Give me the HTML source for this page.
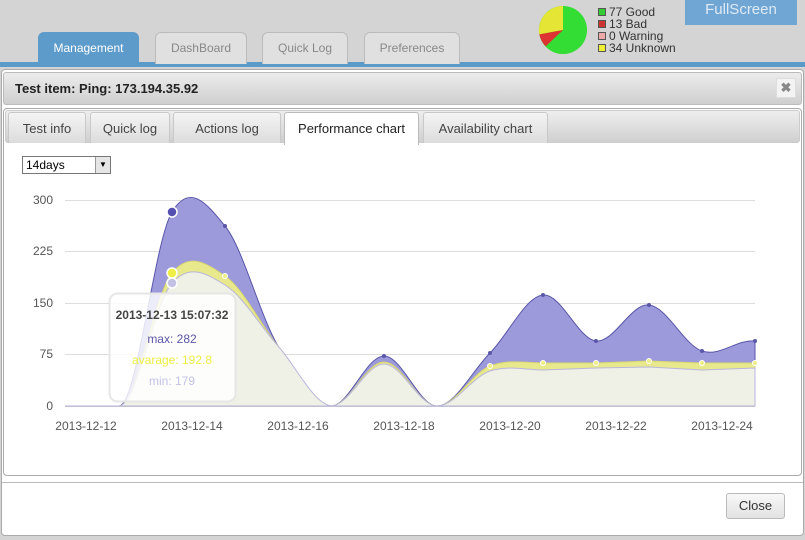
<!DOCTYPE html>
<html><head><meta charset="utf-8"><style>
*{margin:0;padding:0;box-sizing:border-box}
body{width:805px;height:540px;background:#d4d4d4;font-family:"Liberation Sans",sans-serif;position:relative;overflow:hidden}
.abs{position:absolute}
.tab{position:absolute;top:32px;height:32px;border:1px solid #bbb;border-bottom:none;border-radius:6px 6px 0 0;background:#e0e0e0;color:#888;font-size:12px;text-align:center;line-height:30px}
.itab{position:absolute;top:112px;height:31px;border:1px solid #c8c8c8;border-bottom:none;border-radius:3px 3px 0 0;background:linear-gradient(#f4f4f4,#dcdcdc);color:#444;font-size:13px;text-align:center;line-height:31px}
</style></head><body>
<div class="abs" style="left:0;top:62px;width:805px;height:5px;background:#5b9bc9"></div>
<div class="tab" style="left:38px;width:101px;background:#5d9bcb;border-color:#5d9bcb;color:#fff;height:34px">Management</div>
<div class="tab" style="left:155px;width:92px">DashBoard</div>
<div class="tab" style="left:262px;width:86px">Quick Log</div>
<div class="tab" style="left:364px;width:96px">Preferences</div>
<svg class="abs" style="left:538px;top:5px" width="50" height="50" viewBox="-26 -26 52 52">
<circle r="25" fill="#33dd33"/>
<path d="M0 0 L0 -25 A25 25 0 0 0 -24.6 4.5 Z" fill="#e5e535"/>
<path d="M0 0 L-24.6 4.5 A25 25 0 0 0 -18 17 Z" fill="#dd3333"/>
</svg>
<div class="abs" style="left:598px;top:6px;font-size:12px;line-height:12px;color:#333">
<div><span style="display:inline-block;width:8px;height:8px;background:#3c3;border:1px solid #555;margin-right:3px"></span>77 Good</div>
<div><span style="display:inline-block;width:8px;height:8px;background:#c33;border:1px solid #555;margin-right:3px"></span>13 Bad</div>
<div><span style="display:inline-block;width:8px;height:8px;background:#eaa;border:1px solid #555;margin-right:3px"></span>0 Warning</div>
<div><span style="display:inline-block;width:8px;height:8px;background:#ee3;border:1px solid #555;margin-right:3px"></span>34 Unknown</div>
</div>
<div class="abs" style="left:685px;top:0;width:112px;height:25px;background:#6fa6d4;color:#dfeaf5;font-size:15px;text-align:center;line-height:20px">FullScreen</div>
<div class="abs" style="left:1px;top:69px;width:803px;height:467px;background:#fff;border:1px solid #aaa;border-radius:4px"></div>
<div class="abs" style="left:3px;top:72px;width:799px;height:33px;background:linear-gradient(#ececec,#cfcfcf);border:1px solid #bbb;border-radius:3px"></div>
<div class="abs" style="left:15px;top:81px;font-size:13px;font-weight:bold;color:#222">Test item: Ping: 173.194.35.92</div>
<div class="abs" style="left:776px;top:78px;width:20px;height:20px;background:#f3f3f3;border:1px solid #ddd;color:#888;font-size:13px;font-weight:bold;text-align:center;line-height:18px">✖</div>
<div class="abs" style="left:3px;top:108px;width:799px;height:368px;border:1px solid #aaa;border-radius:4px;background:#fff"></div>
<div class="abs" style="left:5px;top:110px;width:795px;height:33px;background:linear-gradient(#eee,#d0d0d0);border:1px solid #ccc;border-radius:3px"></div>
<div class="itab" style="left:8px;width:78px">Test info</div>
<div class="itab" style="left:90px;width:80px">Quick log</div>
<div class="itab" style="left:173px;width:108px">Actions log</div>
<div class="itab" style="left:284px;width:135px;background:#fff;height:33px;border-color:#bbb;color:#222">Performance chart</div>
<div class="itab" style="left:423px;width:125px">Availability chart</div>
<div class="abs" style="left:22px;top:156px;width:89px;height:18px;border:1px solid #777;background:#fff;font-size:12px;line-height:16px;padding-left:3px">14days
<div class="abs" style="right:0;top:0;width:15px;height:16px;background:#e5e5e5;border-left:1px solid #999;font-size:8px;text-align:center;line-height:16px">▼</div></div>
<svg class="abs" style="left:0;top:0" width="805" height="540">
<g stroke="#ddd" stroke-width="1">
<line x1="65" y1="200.5" x2="755" y2="200.5"/><line x1="65" y1="251.5" x2="755" y2="251.5"/><line x1="65" y1="303.5" x2="755" y2="303.5"/><line x1="65" y1="354.5" x2="755" y2="354.5"/></g>
<line x1="65" y1="406.5" x2="755" y2="406.5" stroke="#ccc"/>
<g font-size="12" fill="#555" text-anchor="end" font-family="Liberation Sans">
<text x="53" y="204">300</text><text x="53" y="255">225</text><text x="53" y="307">150</text><text x="53" y="358">75</text><text x="53" y="410">0</text></g>
<g font-size="12" fill="#555" text-anchor="middle" font-family="Liberation Sans">
<text x="86" y="430">2013-12-12</text><text x="192" y="430">2013-12-14</text><text x="298" y="430">2013-12-16</text><text x="404" y="430">2013-12-18</text><text x="510" y="430">2013-12-20</text><text x="616" y="430">2013-12-22</text><text x="722" y="430">2013-12-24</text></g>
<path d="M65 406 L119 406 C137 406 154 242 172 212 C190 182 207 204 225 226 C243 248 260 316 278 346 C296 376 313 404 331 406 C349 406 366 356 384 356 C402 356 419 406 437 406 C455 406 472 371 490 353 C508 335 525 297 543 295 C561 293 578 339 596 341 C614 343 631 303 649 305 C667 307 684 345 702 351 C720 357 737 339 755 341 L755 406 Z" fill="#9d9adb" stroke="#5a57a8" stroke-width="1"/>
<path d="M65 406 L119 406 C137 406 154 295 172 273 C190 251 207 264 225 276 C243 288 260 324 278 346 C296 368 313 403 331 406 C349 406 366 362 384 362 C402 362 419 406 437 406 C455 406 472 373 490 366 C508 359 525 363 543 363 L596 363 L649 361 L702 363 L755 363 L755 406 Z" fill="#e8e88c" stroke="#d8d870"/>
<path d="M65 406 L119 406 C137 406 154 303 172 283 C190 263 207 274 225 285 C243 296 260 326 278 346 C296 366 313 403 331 406 C349 406 366 364 384 364 C402 364 419 406 437 406 C455 406 472 377 490 371 C508 365 525 370 543 370 L596 368 L649 367 L702 370 L755 368 L755 406 Z" fill="#f0f1e6" stroke="#b8b6dc"/>
<g fill="#5a57a8"><circle cx="225" cy="226" r="2"/><circle cx="384" cy="356" r="2"/><circle cx="490" cy="353" r="2"/><circle cx="543" cy="295" r="2"/><circle cx="596" cy="341" r="2"/><circle cx="649" cy="305" r="2"/><circle cx="702" cy="351" r="2"/><circle cx="755" cy="341" r="2"/></g>
<g fill="#eeee88" stroke="#fff"><circle cx="225" cy="276" r="2.5"/><circle cx="490" cy="366" r="2.5"/><circle cx="543" cy="363" r="2.5"/><circle cx="596" cy="363" r="2.5"/><circle cx="649" cy="361" r="2.5"/><circle cx="702" cy="363" r="2.5"/><circle cx="755" cy="363" r="2.5"/></g>
<rect x="109.5" y="293.5" width="126" height="108" rx="8" fill="rgba(255,255,255,0.82)" stroke="#e6e6e6" stroke-width="2"/>
<circle cx="172" cy="212" r="5" fill="#5550b0" stroke="#fff" stroke-width="1.5"/>
<circle cx="172" cy="273" r="5" fill="#eeee44" stroke="#fff" stroke-width="1.5"/>
<circle cx="172" cy="283" r="5" fill="#c3c1e6" stroke="#fff" stroke-width="1.5"/>
<g font-family="Liberation Sans" font-size="12" text-anchor="middle">
<text x="172" y="319" font-weight="bold" fill="#444">2013-12-13 15:07:32</text>
<text x="172" y="343" fill="#5a57a8">max: 282</text>
<text x="172" y="364" fill="#eeee44">avarage: 192.8</text>
<text x="172" y="385" fill="#c3c1e6">min: 179</text></g>
</svg>
<div class="abs" style="left:2px;top:482px;width:801px;height:1px;background:#bbb"></div>
<div class="abs" style="left:726px;top:493px;width:59px;height:26px;border:1px solid #bbb;border-radius:3px;background:linear-gradient(#f8f8f8,#e2e2e2);font-size:13px;color:#333;text-align:center;line-height:24px">Close</div>
</body></html>
